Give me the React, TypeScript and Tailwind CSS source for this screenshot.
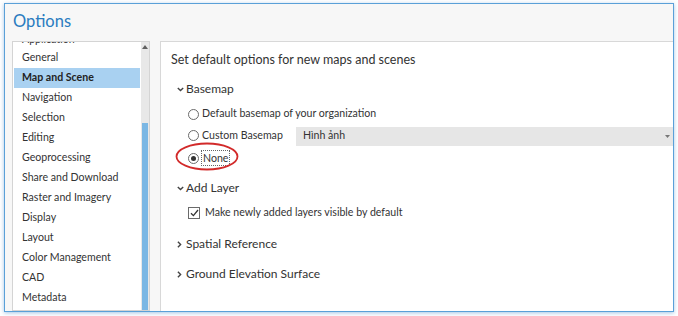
import type { ReactNode } from "react"

const categories = [
  "General",
  "Map and Scene",
  "Navigation",
  "Selection",
  "Editing",
  "Geoprocessing",
  "Share and Download",
  "Raster and Imagery",
  "Display",
  "Layout",
  "Color Management",
  "CAD",
  "Metadata",
]

function ChevronDown() {
  return (
    <svg width="7" height="5" viewBox="0 0 7 5" className="shrink-0">
      <path d="M0.8 0.9 L3.5 3.6 L6.2 0.9" fill="none" stroke="#444" strokeWidth="1.4" />
    </svg>
  )
}

function ChevronRight() {
  return (
    <svg width="5" height="7" viewBox="0 0 5 7" className="shrink-0">
      <path d="M0.9 0.8 L3.6 3.5 L0.9 6.2" fill="none" stroke="#444" strokeWidth="1.4" />
    </svg>
  )
}

function Radio({ checked = false }: { checked?: boolean }) {
  return (
    <span className="flex h-[11px] w-[11px] shrink-0 items-center justify-center rounded-full border border-[#6a6a6a] bg-white">
      {checked && <span className="h-[5px] w-[5px] rounded-full bg-[#333]" />}
    </span>
  )
}

function Section({ open, label }: { open: boolean; label: string }) {
  return (
    <div className="flex h-[22px] items-center pl-[16px] text-[12px] text-[#333]">
      <span className="flex w-[9px] justify-start">{open ? <ChevronDown /> : <ChevronRight />}</span>
      <span>{label}</span>
    </div>
  )
}

function OptionRow({ children }: { children: ReactNode }) {
  return <div className="relative flex h-[22px] items-center pl-[27px] text-[10.6px] text-[#333]">{children}</div>
}

function CategoryList() {
  return (
    <div className="flex w-[138px] shrink-0 border border-[#d4d4d4] bg-white">
      <div className="min-w-0 flex-1 overflow-hidden">
        <div className="mt-[-14px]">
          {/* group heading, scrolled half out of view */}
          <div className="flex h-[20px] items-end pb-[2px] pl-[9px] text-[10.6px] leading-[13px] text-[#333]">Application</div>
          {categories.map((c) => (
            <div
              key={c}
              className={
                c === "Map and Scene"
                  ? "mx-[1px] flex h-[20px] items-center bg-[#a9d1f1] pl-[8px] text-[10.6px] font-bold text-[#222]"
                  : "flex h-[20px] items-center pl-[9px] text-[10.6px] text-[#333]"
              }
            >
              {c}
            </div>
          ))}
        </div>
      </div>
      <div className="flex w-[8px] shrink-0 flex-col bg-[#e8e8e8]">
        <div className="flex h-[81px] shrink-0 justify-center pt-[3px]">
          <svg width="6" height="4" viewBox="0 0 6 4">
            <path d="M0 4 L3 0 L6 4 Z" fill="#606060" />
          </svg>
        </div>
        <div className="ml-[1px] w-[6px] flex-1 bg-[#7bb7e4]" />
      </div>
    </div>
  )
}

function SettingsPanel() {
  return (
    <div className="min-w-0 flex-1 border-l border-t border-[#d8d8d8] bg-white">
      <div className="flex h-[36px] items-center pl-[10px] text-[12.5px] text-[#333]">
        Set default options for new maps and scenes
      </div>

      <Section open label="Basemap" />
      <div className="mt-[3px]">
        <OptionRow>
          <Radio />
          <span className="ml-[3px]">Default basemap of your organization</span>
        </OptionRow>
        <OptionRow>
          <div className="flex w-[108px] shrink-0 items-center">
            <Radio />
            <span className="ml-[3px]">Custom Basemap</span>
          </div>
          <div className="flex h-[19px] flex-1 items-center justify-between bg-[#e6e6e6] pl-[7px] pr-[3px]">
            <span>Hình ảnh</span>
            <svg width="5" height="3" viewBox="0 0 5 3">
              <path d="M0 0 L5 0 L2.5 3 Z" fill="#777" />
            </svg>
          </div>
        </OptionRow>
        <OptionRow>
          <Radio checked />
          <span className="ml-[2px] border border-dotted border-[#666] px-[1px] leading-[14px]">None</span>
          <svg width="64" height="29" viewBox="0 0 64 29" className="absolute left-[14px] top-[-5px]">
            <ellipse cx="32" cy="14.5" rx="30.5" ry="13" fill="none" stroke="#d22a2a" strokeWidth="1.8" />
          </svg>
        </OptionRow>
      </div>

      <div className="mt-[8px]">
        <Section open label="Add Layer" />
      </div>
      <div className="mt-[3px]">
        <OptionRow>
          <span className="flex h-[12px] w-[12px] shrink-0 items-center justify-center border border-[#6a6a6a] bg-white">
            <svg width="9" height="8" viewBox="0 0 9 8">
              <path d="M1 4.2 L3.4 6.6 L8 1" fill="none" stroke="#333" strokeWidth="1.3" />
            </svg>
          </span>
          <span className="ml-[5px]">Make newly added layers visible by default</span>
        </OptionRow>
      </div>

      <div className="mt-[9px]">
        <Section open={false} label="Spatial Reference" />
      </div>
      <div className="mt-[8px]">
        <Section open={false} label="Ground Elevation Surface" />
      </div>
    </div>
  )
}

export default function App() {
  return (
    <div className="h-[316px] w-[678px] overflow-hidden bg-white pl-[4px] pt-[3px] font-['Lato',sans-serif]">
      <div className="flex h-[309px] w-[670px] flex-col border border-[#5aa0d8] bg-[#f7f7f7] shadow-[0_1px_4px_rgba(90,150,210,0.55)]">
        <div className="h-[37px] shrink-0 pl-[8px] pt-[5px] text-[16.5px] leading-[24px] text-[#2a7cc0]">Options</div>
        <div className="flex min-h-0 flex-1 pl-[7px]">
          <CategoryList />
          <div className="w-[10px] shrink-0" />
          <SettingsPanel />
        </div>
      </div>
    </div>
  )
}
